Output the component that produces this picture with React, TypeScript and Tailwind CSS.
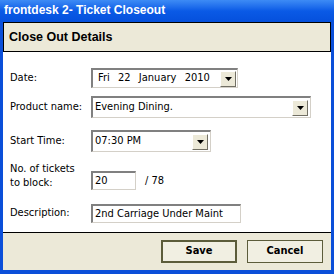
import React from "react";

const font = { fontFamily: "'DejaVu Sans Condensed', 'Liberation Sans', sans-serif" };
const boldFont = { fontFamily: "'Liberation Sans', Arial, sans-serif" };

function Arrow() {
  return (
    <div className="w-[16px] h-[16px] bg-[#ECE9D8] border-t border-l border-t-white border-l-white border-b border-r border-b-[#716F64] border-r-[#716F64] flex items-center justify-center">
      <svg width="7" height="4" viewBox="0 0 7 4">
        <path d="M0 0 H7 L3.5 4 Z" fill="#000" />
      </svg>
    </div>
  );
}

function Sunken({ className, children }: { className: string; children?: React.ReactNode }) {
  return (
    <div
      className={
        "bg-white border-t-2 border-l-2 border-t-[#808080] border-l-[#808080] border-b border-r border-b-[#D4D0C8] border-r-[#D4D0C8] flex items-center " +
        className
      }
    >
      {children}
    </div>
  );
}

export default function App() {
  return (
    <div className="w-[334px] h-[274px] bg-[#0B4FD9] flex flex-col text-[11px] text-black" style={font}>
      <div className="h-[22px] shrink-0 bg-gradient-to-b from-[#3D8BF5] via-[#0A5AE6] to-[#0550DC] flex items-center pl-[4px] pb-[2px]">
        <span className="text-white font-bold text-[12px] leading-none" style={boldFont}>frontdesk 2- Ticket Closeout</span>
      </div>
      <div className="flex-1 flex flex-col pl-[3px] pr-[3px] pb-[4px]">
        <div className="h-[30px] shrink-0 bg-[#ECE9D8] border border-black flex items-center pl-[5px]">
          <span className="font-bold text-[12.5px]" style={boldFont}>Close Out Details</span>
        </div>
        <div className="flex-1 bg-white flex flex-col pl-[7px] pt-[16px]">
          <div className="flex items-center h-[20px]">
            <div className="w-[81px]">Date:</div>
            <Sunken className="w-[147px] h-[20px] justify-between pl-[5px] pr-[1px]">
              <span className="whitespace-pre [word-spacing:1px]">Fri  22  January  2010</span>
              <Arrow />
            </Sunken>
          </div>
          <div className="flex items-center h-[22px] mt-[8px]">
            <div className="w-[81px]">Product name:</div>
            <Sunken className="w-[220px] h-[22px] justify-between pl-[2px] pr-[2px]">
              <span>Evening Dining.</span>
              <Arrow />
            </Sunken>
          </div>
          <div className="flex items-center h-[22px] mt-[12px]">
            <div className="w-[81px]">Start Time:</div>
            <Sunken className="w-[120px] h-[22px] justify-between pl-[2px] pr-[2px]">
              <span>07:30 PM</span>
              <Arrow />
            </Sunken>
          </div>
          <div className="flex items-start mt-[4px]">
            <div className="w-[81px] leading-[14px] pt-[6px]">
              No. of tickets
              <br />
              to block:
            </div>
            <Sunken className="w-[45px] h-[19px] mt-[15px] pl-[2px]">
              <span>20</span>
            </Sunken>
            <span className="mt-[17px] ml-[9px]">/ 78</span>
          </div>
          <div className="flex items-center h-[19px] mt-[14px]">
            <div className="w-[81px]">Description:</div>
            <Sunken className="w-[150px] h-[19px] pl-[2px]">
              <span>2nd Carriage Under Maint</span>
            </Sunken>
          </div>
        </div>
        <div className="h-[38px] shrink-0 bg-[#ECE9D8] border-t border-black flex items-center justify-end gap-[10px] pr-[8px]">
          <button className="w-[76px] h-[23px] border-2 border-[#5C5C3A] bg-[#F1EFE2] font-bold text-[11px]">Save</button>
          <button className="w-[76px] h-[23px] border border-[#5C5C3A] bg-[#F1EFE2] font-bold text-[11px]">Cancel</button>
        </div>
      </div>
    </div>
  );
}
